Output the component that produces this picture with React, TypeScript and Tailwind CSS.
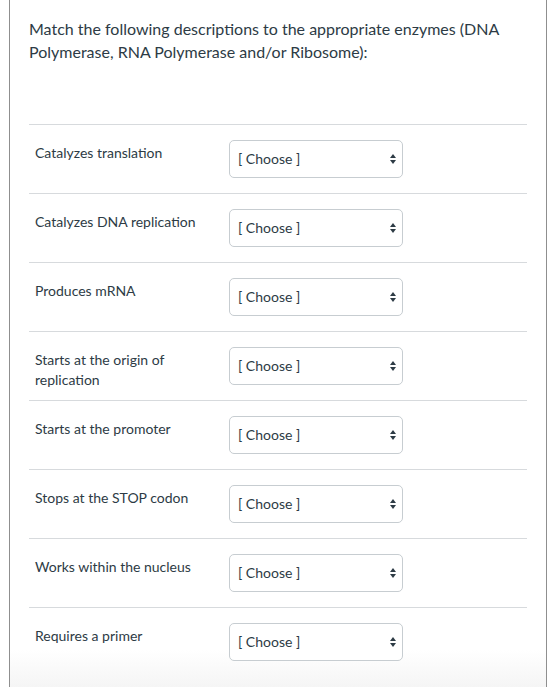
import React from "react";

const rows: string[][] = [
  ["Catalyzes translation"],
  ["Catalyzes DNA replication"],
  ["Produces mRNA"],
  ["Starts at the origin of", "replication"],
  ["Starts at the promoter"],
  ["Stops at the STOP codon"],
  ["Works within the nucleus"],
  ["Requires a primer"],
];

function Arrows() {
  return (
    <svg width="8" height="12" viewBox="0 0 8 12" className="shrink-0">
      <path d="M4 1 L7 5 L1 5 Z" fill="#2d3b45" />
      <path d="M4 11 L7 7 L1 7 Z" fill="#2d3b45" />
    </svg>
  );
}

export default function App() {
  return (
    <div
      className="w-[548px] h-[687px] overflow-hidden bg-white"
      style={{ fontFamily: "Lato, 'Open Sans', sans-serif" }}
    >
      <div className="ml-[9px] w-[538px] h-[687px] border-x border-[#8f8f8f] bg-[linear-gradient(to_bottom,#ffffff_650px,#f5f5f5_687px)] pl-[19px] pr-[19px] pt-[17px]">
        <p className="text-[16px] leading-[23px] text-[#2d3b45]">
          Match the following descriptions to the appropriate enzymes (DNA
          <br />
          Polymerase, RNA Polymerase and/or Ribosome):
        </p>
        <div className="mt-[61px]">
          {rows.map((r, i) => (
            <div
              key={i}
              className="flex items-start border-t border-[#d7dadd] h-[69px] pt-[15px]"
            >
              <div className="w-[200px] pl-[6px] pt-[3px] text-[14px] leading-[20px] text-[#2d3b45]">
                {r.map((l, j) => (
                  <div key={j}>{l}</div>
                ))}
              </div>
              <div className="w-[174px] h-[38px] border border-[#c7cdd1] rounded-[5px] flex items-center justify-between pl-[8px] pr-[5px] text-[14px] text-[#2d3b45] bg-white">
                <span className="pb-[1px]">[ Choose ]</span>
                <Arrows />
              </div>
            </div>
          ))}
        </div>
      </div>
    </div>
  );
}
